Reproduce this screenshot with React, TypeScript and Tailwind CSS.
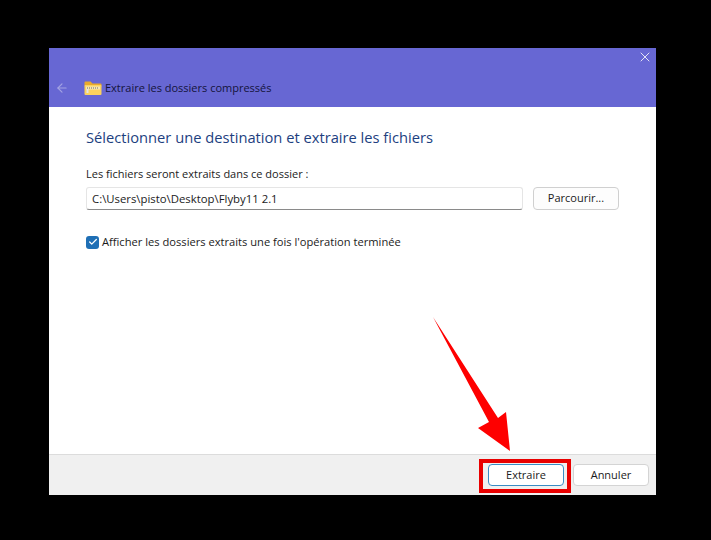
import { ArrowLeft, Check, X } from "lucide-react";

function FolderZip() {
  return (
    <svg width="18" height="16" viewBox="0 0 18 16">
      <path d="M0.5 2.5 a1 1 0 0 1 1-1 h5 l2 2 h8 a1 1 0 0 1 1 1 v2 h-17z" fill="#e8a92c" />
      <rect x="0.5" y="5" width="17" height="10" rx="1" fill="#fbd25e" />
      <rect x="2" y="6.5" width="14" height="3" fill="#f6e7b5" />
      <path d="M3 8h11" stroke="#6b6b6b" strokeWidth="1" strokeDasharray="1 1" />
      <rect x="2.5" y="9" width="2" height="4" fill="#e4e4e4" />
    </svg>
  );
}

function RedArrow() {
  return (
    <svg className="absolute left-[430px] top-[315px]" width="90" height="140" viewBox="0 0 90 140">
      <path d="M3 2 L59 107 L48 113 L80 136 L76 97 L68 103 Z" fill="#fe0000" />
    </svg>
  );
}

export default function App() {
  return (
    <div
      className="relative h-[540px] w-[711px] overflow-hidden bg-black pl-[49px] pt-[48px] text-[11px] text-[#1b1b1b]"
      style={{ fontFamily: '"Open Sans", "Noto Sans", sans-serif' }}
    >
      <div className="flex h-[447px] w-[607px] flex-col bg-white">
        {/* Title bar */}
        <div className="flex h-[59px] flex-col bg-[#6767d3]">
          <div className="flex justify-end pr-[3px] pt-[1px]">
            <X className="h-[16px] w-[16px] text-[#e4e4f6]" strokeWidth={1.5} />
          </div>
          <div className="mt-[15px] flex items-center pl-[6px]">
            <ArrowLeft className="h-[14px] w-[14px] text-[#a3a3e3]" strokeWidth={2} />
            <div className="ml-[15px] mr-[3px]">
              <FolderZip />
            </div>
            <span className="text-[#14143c]">Extraire les dossiers compressés</span>
          </div>
        </div>

        {/* Content */}
        <div className="flex flex-1 flex-col pl-[37px] pr-[37px] pt-[19px]">
          <h1 className="text-[14.7px] leading-[22px] text-[#1d3f7f]">
            Sélectionner une destination et extraire les fichiers
          </h1>
          <p className="mt-[18px] leading-[16px]">Les fichiers seront extraits dans ce dossier :</p>
          <div className="mt-[5px] flex items-center gap-[10px]">
            <div className="flex h-[23px] w-[437px] items-center rounded-[3px] border border-[#e5e5e5] border-b-[#8a8a8a] pl-[5px] text-[11.35px]">
              C:\Users\pisto\Desktop\Flyby11 2.1
            </div>
            <div className="flex h-[23px] w-[86px] items-center justify-center rounded-[4px] border border-[#d0d0d0] bg-[#fdfdfd]">
              Parcourir...
            </div>
          </div>
          <div className="mt-[24px] flex items-center gap-[3px]">
            <div className="flex h-[13px] w-[13px] items-center justify-center rounded-[3px] bg-[#1f6fb5]">
              <Check className="h-[10px] w-[10px] text-white" strokeWidth={3} />
            </div>
            <span className="text-[11.15px]">Afficher les dossiers extraits une fois l'opération terminée</span>
          </div>
        </div>

        {/* Footer */}
        <div className="flex h-[41px] items-start justify-end gap-[9px] border-t border-[#dcdcdc] bg-[#f0f0f0] pr-[7px] pt-[9px]">
          <div className="flex h-[22px] w-[76px] items-center justify-center rounded-[4px] border border-[#3a8cc4] bg-white">
            Extraire
          </div>
          <div className="flex h-[22px] w-[76px] items-center justify-center rounded-[4px] border border-[#d4d4d4] bg-white">
            Annuler
          </div>
        </div>
      </div>

      {/* Annotation */}
      <div className="absolute left-[479px] top-[459px] h-[34px] w-[92px] border-[4px] border-[#e90000]" />
      <RedArrow />
    </div>
  );
}
